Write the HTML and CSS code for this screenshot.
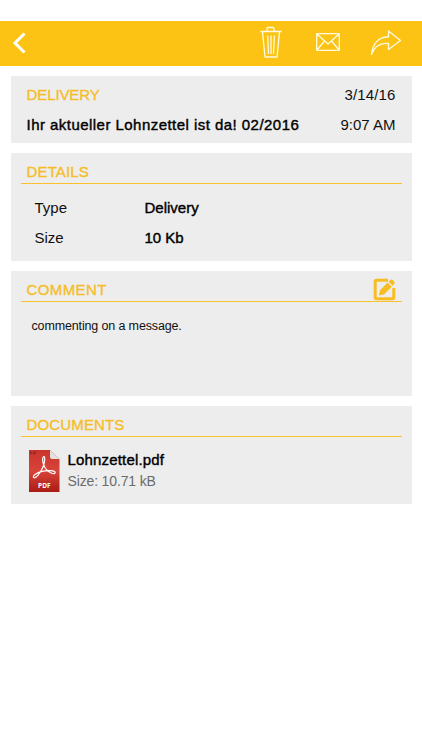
FILE: index.html
```html
<!DOCTYPE html>
<html lang="en">
<head>
    <meta charset="utf-8">
    <title>Delivery</title>
    <link rel="stylesheet" href="styles.css">
</head>
<body>
    <header class="toolbar">
        <svg class="back" width="14" height="22" viewBox="0 0 14 22"><path d="M12.5 1.5L3 11L12.5 20.5"/></svg>
        <div class="actions">
            <svg class="trash" width="24" height="34" viewBox="0 0 24 34"><path d="M1.5 5.5H22.5M8 5V2.5Q8 1.5 9 1.5H14Q15 1.5 15 2.5V5M3.5 6L6 31H18L20.5 6M8.7 9.5L9.5 28M12 9.5V28M15.3 9.5L14.5 28"/></svg>
            <svg class="mail" width="24" height="18" viewBox="0 0 24 18"><path d="M.7.7H23.3V17.3H.7ZM1 1L12 11L23 1M1 17L8.5 8M23 17L15.5 8"/></svg>
            <svg class="share" width="32" height="26" viewBox="0 0 32 26"><path d="M1.5 24.5C2.5 14 8.5 6.5 18.5 7V1L30.5 10.5L18.5 19.5V13.5C10 12.5 4.5 16.5 1.5 24.5Z"/></svg>
        </div>
    </header>
    <main class="cards">
        <section class="card summary">
            <div class="row">
                <h2>DELIVERY</h2>
                <span class="date">3/14/16</span>
            </div>
            <div class="row">
                <span class="subject">Ihr aktueller Lohnzettel ist da! 02/2016</span>
                <span class="time">9:07 AM</span>
            </div>
        </section>
        <section class="card details">
            <div class="card-title">
                <h2 class="details-title">DETAILS</h2>
            </div>
            <dl>
                <dt>Type</dt>
                <dd class="type">Delivery</dd>
                <dt>Size</dt>
                <dd>10 Kb</dd>
            </dl>
        </section>
        <section class="card comment">
            <div class="card-title">
                <h2>COMMENT</h2>
                <svg class="edit" width="24" height="23" viewBox="0 0 24 23">
                    <path class="edit-box" d="M15 2.2H3.5Q2.2 2.2 2.2 3.5V19.5Q2.2 20.8 3.5 20.8H19.5Q20.8 20.8 20.8 19.5V10"/>
                    <path d="M6 17.5L7 12.3L14.6 4.6L18.8 8.8L11 16.5ZM15.6 3.7L17.3 2.1Q18.5 1 19.8 2.2L21.2 3.6Q22.3 4.8 21.2 6L19.6 7.7Z"/>
                </svg>
            </div>
            <p>commenting on a message.</p>
        </section>
        <section class="card documents">
            <div class="card-title">
                <h2>DOCUMENTS</h2>
            </div>
            <div class="file">
                <svg class="pdf" width="33" height="44" viewBox="0 0 33 44">
                    <defs>
                        <linearGradient id="red" x1="0" y1="0" x2="0" y2="1">
                            <stop offset="0" stop-color="#c9342b"/>
                            <stop offset=".5" stop-color="#d8443a"/>
                            <stop offset="1" stop-color="#a91c14"/>
                        </linearGradient>
                    </defs>
                    <path fill="url(#red)" d="M1 1H22L31.5 10V43H1Z"/>
                    <path fill="#e4e0df" d="M22 1L31.5 10H24Q22 10 22 8Z"/>
                    <path fill="none" stroke="#8d2420" stroke-width=".8" d="M2.5 5.5V2.5L4.5 5L6.5 2.5V5.5M6.5 5.5L8 2.5"/>
                    <path class="acrobat" d="M15.2 8C17.5 6 17.2 13.5 14.5 19C12 24.5 8 29.5 6 28.8C3.5 27.5 8.5 23.5 14 22.3C20 21 27 21.5 27.2 23.6C27.3 26 21 24.2 17.5 19.5C15 15.8 13.8 9.8 15.2 8Z"/>
                    <text x="16.3" y="38.8">PDF</text>
                </svg>
                <div class="file-info">
                    <div class="file-name">Lohnzettel.pdf</div>
                    <div class="file-size">Size: 10.71 kB</div>
                </div>
            </div>
        </section>
    </main>
</body>
</html>
```

FILE: styles.css
```css
body {
    margin: 0;
    padding-top: 20.5px;
    background: #fff;
    color: #111;
    font-family: "Liberation Sans", Arial, sans-serif;
    font-size: 15px;
    line-height: 18px;
}
h2, p, dl, dd {
    margin: 0;
}
.toolbar {
    display: flex;
    justify-content: space-between;
    align-items: center;
    height: 45px;
    padding: 0 20px 0 12px;
    background: #fcc314;
}
.toolbar svg {
    fill: none;
    stroke: #fffbe0;
    stroke-width: 1.3;
    stroke-linejoin: round;
}
.toolbar .back {
    stroke: #fff;
    stroke-width: 3;
    stroke-linejoin: miter;
}
.actions {
    display: flex;
    align-items: center;
}
.trash {
    margin-right: 33px;
}
.mail {
    margin: -2px 30px 0 0;
}
.cards {
    display: flex;
    flex-direction: column;
    gap: 10px;
    padding: 10px 10.5px;
}
.card {
    box-sizing: border-box;
    background: #ededed;
}
h2 {
    color: #f6bd27;
    font-size: 15px;
    font-weight: normal;
    letter-spacing: 0.15px;
    -webkit-text-stroke: 0.35px #f6bd27;
}
.subject, dd, .file-name {
    color: #000;
    -webkit-text-stroke: 0.4px #000;
}
.subject {
    letter-spacing: 0.46px;
}
.file-name {
    letter-spacing: 0.17px;
}
.summary {
    display: flex;
    flex-direction: column;
    gap: 12px;
    height: 67.5px;
    padding: 10px 16px 0;
}
.summary h2 {
    letter-spacing: -0.1px;
}
.row {
    display: flex;
    justify-content: space-between;
}
.date {
    letter-spacing: 0.15px;
}
.card-title {
    display: flex;
    justify-content: space-between;
    height: 19.5px;
    margin: 0 10px;
    padding: 10px 5px 0 6px;
    border-bottom: 1px solid #f9c22b;
}
.details {
    height: 108px;
}
dl {
    display: grid;
    grid-template-columns: 110px 1fr;
    row-gap: 12px;
    padding: 15.5px 24px 0;
}
.comment {
    height: 125px;
}
.comment h2 {
    margin-top: -0.5px;
    letter-spacing: 0.4px;
}
.edit {
    margin-top: -3.5px;
    fill: #f7bd22;
}
.edit-box {
    fill: none;
    stroke: #f7bd22;
    stroke-width: 3;
}
.comment p {
    padding: 15px 21px;
    font-size: 12.5px;
    letter-spacing: -0.14px;
}
.documents {
    height: 98px;
}
.file {
    display: flex;
    gap: 7px;
    padding: 12.5px 17px 0;
}
.pdf text {
    fill: #fff;
    font-family: "Open Sans", sans-serif;
    font-size: 6.5px;
    font-weight: bold;
    text-anchor: middle;
}
.acrobat {
    fill: none;
    stroke: #fff;
    stroke-width: 1.2;
}
.file-info {
    padding-top: 2px;
}
.file-size {
    margin-top: 3px;
    color: #6b6b6b;
    font-size: 14px;
    letter-spacing: -0.15px;
}
```
